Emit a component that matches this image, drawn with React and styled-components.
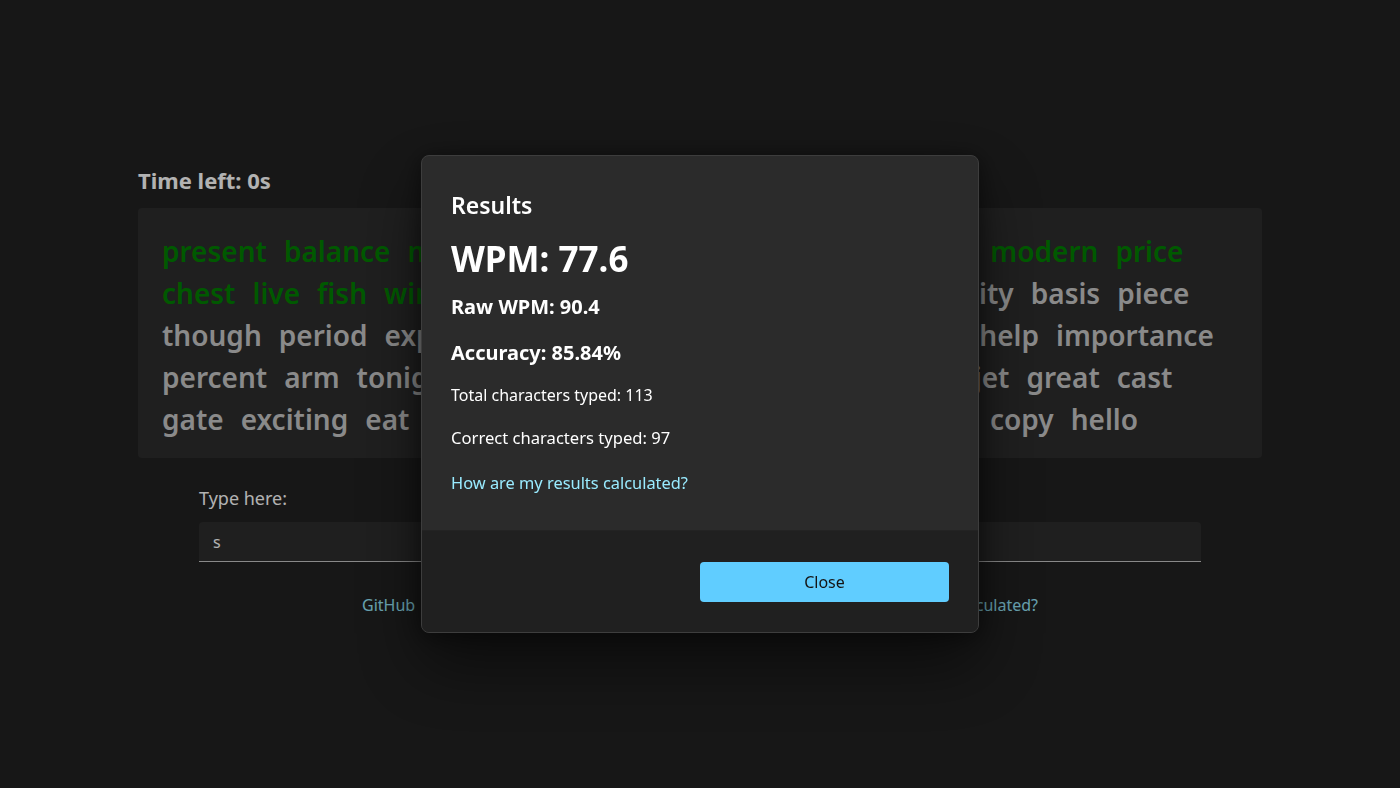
import React from "react";
import styled, { createGlobalStyle } from "styled-components";

const GlobalStyle = createGlobalStyle`
  html, body {
    margin: 0;
    padding: 0;
    background: #212121;
  }
  body {
    font-family: "Noto Sans", "Open Sans", sans-serif;
    color: #ffffff;
  }
`;

const lines = [
  { typed: 13, words: ["present", "balance", "mention", "stranger", "bottom", "brush", "sound", "modern", "price"] },
  { typed: 6, words: ["chest", "live", "fish", "window", "traveler", "carry", "horse", "dream", "quality", "basis", "piece"] },
  { typed: 0, words: ["though", "period", "explain", "strong", "clock", "smooth", "something", "help", "importance"] },
  { typed: 0, words: ["percent", "arm", "tonight", "village", "stone", "river", "morning", "song", "jet", "great", "cast"] },
  { typed: 0, words: ["gate", "exciting", "eat", "winter", "castle", "number", "morning", "pretty", "copy", "hello"] },
];

const Page = styled.main`
  min-height: 100vh;
  box-sizing: border-box;
  padding-bottom: 5px;
  display: flex;
  flex-direction: column;
  align-items: center;
  justify-content: center;
`;

const Game = styled.section`
  width: 1124px;
  display: flex;
  flex-direction: column;
  align-items: center;
`;

const TimeLeft = styled.div`
  align-self: flex-start;
  font-size: 22px;
  font-weight: 700;
  line-height: 26px;
  margin-bottom: 15px;
`;

const WordCard = styled.div`
  align-self: stretch;
  background: #2d2d2d;
  border-radius: 4px;
  padding: 22px 24px 18px;
`;

const WordLine = styled.div`
  display: flex;
  gap: 17px;
  height: 42px;
  align-items: center;
  white-space: nowrap;
`;

const Word = styled.span`
  font-size: 28px;
  font-weight: 600;
  color: ${(p) => (p.$typed ? "#008000" : "#c6c6c6")};
`;

const InputBlock = styled.div`
  width: 1002px;
  margin-top: 29px;
  display: flex;
  flex-direction: column;
`;

const InputLabel = styled.label`
  font-size: 18px;
  line-height: 22px;
  margin-bottom: 13px;
`;

const TextBox = styled.input`
  height: 40px;
  box-sizing: border-box;
  border: none;
  border-bottom: 1px solid #c5c5c5;
  border-radius: 4px 4px 0 0;
  background: #2d2d2d;
  color: #ffffff;
  padding: 0 14px;
  font-family: inherit;
  font-size: 16px;
  outline: none;
`;

const LinkRow = styled.nav`
  width: 676px;
  margin-top: 32px;
  display: flex;
  justify-content: space-between;
`;

const Link = styled.a`
  font-size: 16px;
  line-height: 22px;
  color: #99ebff;
  text-decoration: none;
`;

const Overlay = styled.div`
  position: fixed;
  inset: 0;
  background: rgba(0, 0, 0, 0.3);
  display: flex;
  align-items: center;
  justify-content: center;
`;

const Dialog = styled.div`
  width: 558px;
  box-sizing: border-box;
  border: 1px solid #3d3d3d;
  border-radius: 8px;
  overflow: hidden;
  background: #2b2b2b;
  box-shadow: 0 32px 64px rgba(0, 0, 0, 0.5), 0 2px 21px rgba(0, 0, 0, 0.45);
`;

const DialogBody = styled.div`
  padding: 33px 29px 36px;
  display: flex;
  flex-direction: column;
`;

const Title = styled.h2`
  margin: 0;
  font-size: 23px;
  font-weight: 600;
  line-height: 32px;
`;

const Stat = styled.div`
  margin-top: ${(p) => p.$gap}px;
  font-size: ${(p) => p.$size}px;
  font-weight: ${(p) => p.$weight};
  line-height: ${(p) => p.$line}px;
`;

const DialogLink = styled(Link)`
  margin-top: 23px;
  font-size: 16.4px;
`;

const Footer = styled.div`
  background: #202020;
  border-top: 1px solid #232323;
  padding: 31px 29px 30px;
  display: flex;
  justify-content: flex-end;
`;

const CloseButton = styled.button`
  width: 249px;
  height: 40px;
  border: none;
  border-radius: 4px;
  background: #60cdff;
  color: #141414;
  font-family: inherit;
  font-size: 16px;
`;

export default function App() {
  return (
    <>
      <GlobalStyle />
      <Page>
        <Game>
          <TimeLeft>Time left: 0s</TimeLeft>
          <WordCard>
            {lines.map((line, i) => (
              <WordLine key={i}>
                {line.words.map((w, j) => (
                  <Word key={j} $typed={j < line.typed}>{w}</Word>
                ))}
              </WordLine>
            ))}
          </WordCard>
          <InputBlock>
            <InputLabel htmlFor="typing">Type here:</InputLabel>
            <TextBox id="typing" defaultValue="s" />
          </InputBlock>
          <LinkRow>
            <Link href="#">GitHub</Link>
            <Link href="#">How are my results calculated?</Link>
          </LinkRow>
        </Game>
      </Page>
      <Overlay>
        <Dialog role="dialog">
          <DialogBody>
            <Title>Results</Title>
            <Stat $gap={16} $size={35} $weight={700} $line={44}>WPM: 77.6</Stat>
            <Stat $gap={13} $size={20} $weight={700} $line={26}>Raw WPM: 90.4</Stat>
            <Stat $gap={20} $size={20} $weight={700} $line={26}>Accuracy: 85.84%</Stat>
            <Stat $gap={18} $size={16} $weight={400} $line={22}>Total characters typed: 113</Stat>
            <Stat $gap={21} $size={16.6} $weight={400} $line={22}>Correct characters typed: 97</Stat>
            <DialogLink href="#">How are my results calculated?</DialogLink>
          </DialogBody>
          <Footer>
            <CloseButton>Close</CloseButton>
          </Footer>
        </Dialog>
      </Overlay>
    </>
  );
}
